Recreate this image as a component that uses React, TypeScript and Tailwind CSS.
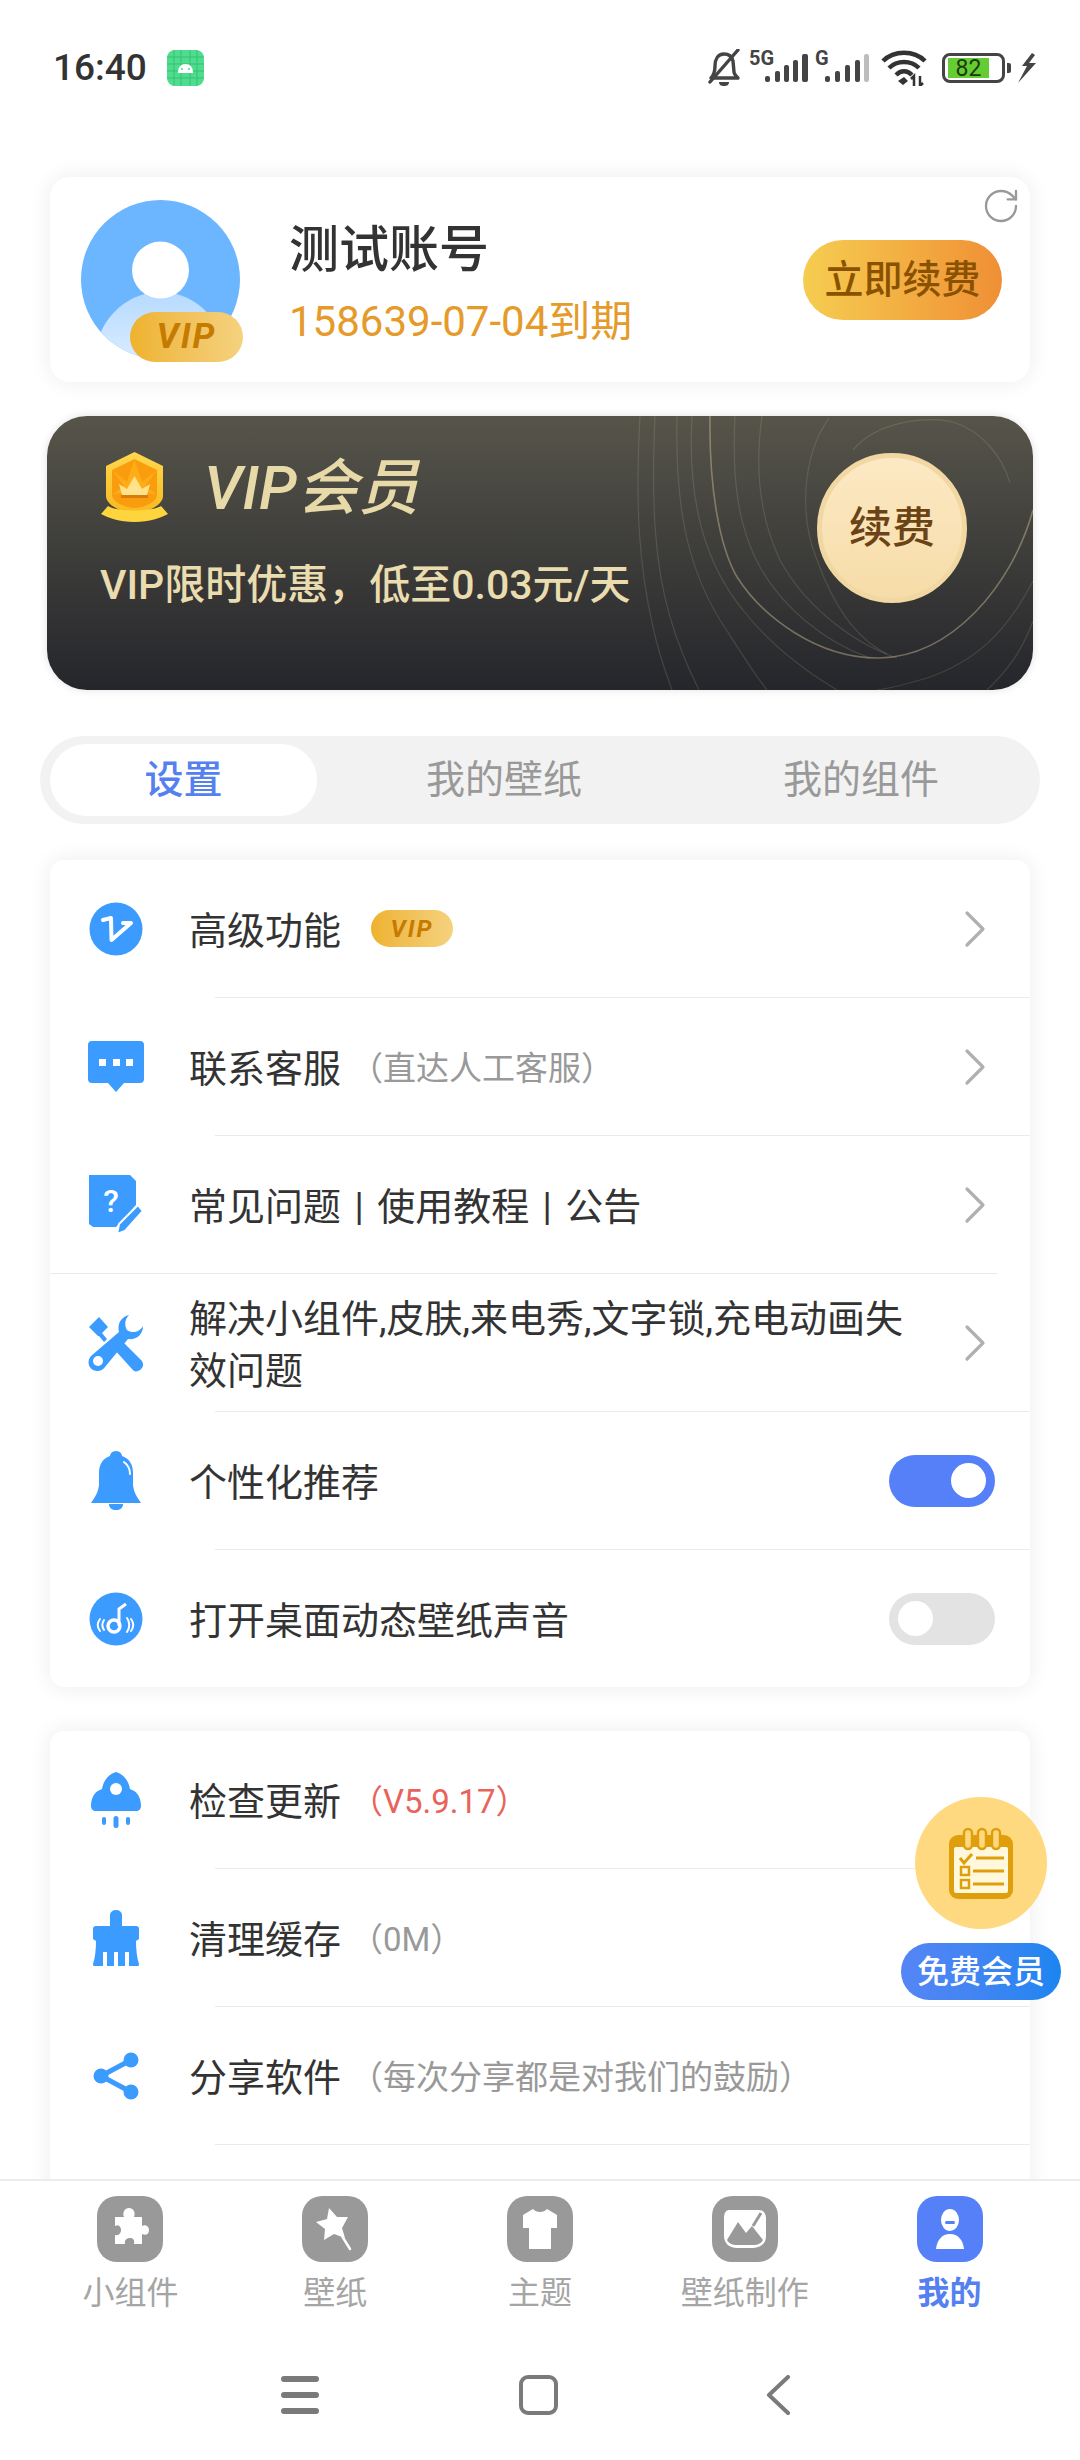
import { RotateCw } from "lucide-react";
import type { ReactNode } from "react";

const BLUE = "#3b9bff";

const VipTag = ({ className }: { className: string }) => (
  <div className={`flex items-center justify-center rounded-full bg-linear-to-r from-[#eeb22c] to-[#f5d27e] italic font-bold text-[#c57a00] ${className}`}>
    VIP
  </div>
);

const Chevron = () => (
  <svg width="22" height="38" viewBox="0 0 22 38" className="mr-[9px] shrink-0">
    <polyline points="3,3 19,19 3,35" fill="none" stroke="#b0b0b0" strokeWidth="3.2" strokeLinecap="round" strokeLinejoin="round" />
  </svg>
);

const Toggle = ({ on }: { on: boolean }) => (
  <div className={`flex h-[52px] w-[106px] shrink-0 items-center rounded-full px-[9px] ${on ? "justify-end bg-[#5580f8]" : "justify-start bg-[#e3e3e3]"}`}>
    <div className="h-[35px] w-[35px] rounded-full bg-white" />
  </div>
);

const VCircle = () => (
  <svg width="54" height="54" viewBox="0 0 54 54">
    <circle cx="27" cy="27" r="26.5" fill={BLUE} />
    <path d="M14 18 L22 16 L22.5 38 L42 21 L34 21" fill="none" stroke="#fff" strokeWidth="4" strokeLinejoin="round" strokeLinecap="round" />
  </svg>
);

const ChatIcon = () => (
  <svg width="56" height="52" viewBox="0 0 56 52">
    <path d="M4 0 H52 a4 4 0 0 1 4 4 V38 a4 4 0 0 1 -4 4 H36 L28 51 L20 42 H4 a4 4 0 0 1 -4 -4 V4 a4 4 0 0 1 4 -4 Z" fill={BLUE} />
    <rect x="11" y="18" width="7" height="7" fill="#fff" />
    <rect x="25" y="18" width="7" height="7" fill="#fff" />
    <rect x="38" y="18" width="7" height="7" fill="#fff" />
  </svg>
);

const HelpIcon = () => (
  <svg width="56" height="60" viewBox="0 0 56 60">
    <path d="M1 0 H42 L48 6 V30 L28 52 H5 L1 49 Z" fill={BLUE} />
    <path d="M29 59 L31 49 L50 30 L55 36 L37 56 Z" fill={BLUE} stroke="#fff" strokeWidth="2" />
    <text x="23" y="37" textAnchor="middle" fontSize="32" fontWeight="500" fill="#fff" fontFamily="Roboto">?</text>
  </svg>
);

const ToolsIcon = () => (
  <svg width="56" height="58" viewBox="0 0 56 58">
    <path d="M1 13 L11 3 L20 13 L14 19 L19 25 L16 28 L11 22 L10 22 Z" fill={BLUE} />
    <path d="M41 1 C33 3 29 10 31 18 L3 42 C-1 47 0 53 5 56 C10 58 14 57 17 53 L40 25 C48 26 55 21 55 12 C52 18 44 20 39 16 C36 11 37 5 41 1 Z" fill={BLUE} />
    <path d="M25 34 L33 26 L54 47 C56 51 55 54 52 56 C49 58 46 58 44 55 Z" fill={BLUE} />
    <circle cx="10" cy="47" r="5" fill="#fff" />
  </svg>
);

const BellIcon = () => (
  <svg width="50" height="60" viewBox="0 0 50 60">
    <path d="M25 0 C29 0 31 3 31 5 C39 8 42 14 42 22 L42 34 C43 42 46 46 50 52 H0 C4 46 7 42 8 34 L8 22 C8 14 11 8 19 5 C19 3 21 0 25 0 Z" fill={BLUE} />
    <path d="M18 53 H32 C32 57 29 59 25 59 C21 59 18 57 18 53 Z" fill={BLUE} />
    <path d="M33 11 C37 14 39 18 39 23" fill="none" stroke="#fff" strokeWidth="2" strokeLinecap="round" />
  </svg>
);

const SoundIcon = () => (
  <svg width="54" height="54" viewBox="0 0 54 54">
    <circle cx="27" cy="27" r="26.5" fill={BLUE} />
    <circle cx="25" cy="34" r="6" fill="none" stroke="#fff" strokeWidth="3.4" />
    <path d="M30 34 L30 17 L37 12" fill="none" stroke="#fff" strokeWidth="3" />
    <path d="M15 28 C13 31 13 35 15 38 M11 27 C8 31 8 35 11 39 M38 26 C41 30 41 36 38 40 M42 27 C45 31 45 35 42 39" fill="none" stroke="#fff" strokeWidth="2" strokeLinecap="round" />
  </svg>
);

const RocketIcon = () => (
  <svg width="50" height="56" viewBox="0 0 50 56">
    <path d="M25 0 C33 2 38 10 39 17 C45 19 50 24 50 34 C50 37 48 39 45 39 H5 C2 39 0 37 0 34 C0 24 5 19 11 17 C12 10 17 2 25 0 Z" fill={BLUE} />
    <circle cx="25" cy="17" r="6" fill="#fff" />
    <rect x="11" y="45" width="4" height="8" rx="2" fill={BLUE} />
    <rect x="22.5" y="44" width="5" height="12" rx="2.5" fill={BLUE} />
    <rect x="35" y="45" width="4" height="8" rx="2" fill={BLUE} />
  </svg>
);

const BrushIcon = () => (
  <svg width="48" height="56" viewBox="0 0 48 56">
    <path d="M18 5 a6 5 0 0 1 12 0 V16 H44 a3 3 0 0 1 3 3 V29 L44 31 C44 40 45 48 47 54 a1.5 1.5 0 0 1 -1 2 H37 V42 H33 V56 H26 V42 H22 V56 H15 V42 H11 V56 H2 a1.5 1.5 0 0 1 -1 -2 C3 48 4 40 4 31 L1 29 V19 a3 3 0 0 1 3 -3 H18 Z" fill={BLUE} />
  </svg>
);

const ShareIcon = () => (
  <svg width="46" height="48" viewBox="0 0 46 48">
    <path d="M38 8 L8 24 L38 40" fill="none" stroke={BLUE} strokeWidth="5" />
    <circle cx="38" cy="8" r="7.5" fill={BLUE} />
    <circle cx="8" cy="24" r="7.5" fill={BLUE} />
    <circle cx="38" cy="40" r="7.5" fill={BLUE} />
  </svg>
);

type Row = {
  icon: ReactNode;
  title: string;
  sub?: string;
  subColor?: string;
  vip?: boolean;
  right?: "chevron" | "on" | "off";
  divider?: "inset" | "wide" | "none";
};

const settingsRows: Row[] = [
  { icon: <VCircle />, title: "高级功能", vip: true, right: "chevron" },
  { icon: <ChatIcon />, title: "联系客服", sub: "（直达人工客服）", right: "chevron" },
  { icon: <HelpIcon />, title: "常见问题 | 使用教程 | 公告", right: "chevron", divider: "wide" },
  { icon: <ToolsIcon />, title: "解决小组件,皮肤,来电秀,文字锁,充电动画失效问题", right: "chevron" },
  { icon: <BellIcon />, title: "个性化推荐", right: "on" },
  { icon: <SoundIcon />, title: "打开桌面动态壁纸声音", right: "off", divider: "none" },
];

const otherRows: Row[] = [
  { icon: <RocketIcon />, title: "检查更新", sub: "（V5.9.17）", subColor: "text-[#e8635a]" },
  { icon: <BrushIcon />, title: "清理缓存", sub: "（0M）" },
  { icon: <ShareIcon />, title: "分享软件", sub: "（每次分享都是对我们的鼓励）" },
  { icon: null, title: "" },
];

const ListCard = ({ rows }: { rows: Row[] }) => (
  <div className="rounded-[14px] bg-white shadow-[0_0_22px_rgba(0,0,0,0.08)]">
    {rows.map((row, i) => (
      <div key={i}>
        <div className="flex h-[137px] items-center pl-[38px] pr-[35px]">
          <div className="flex w-[56px] shrink-0 justify-center">{row.icon}</div>
          <div className="ml-[45px] flex min-w-0 flex-1 items-center pr-[32px] pt-[5px]">
            <span className="text-[38px] leading-[52px] text-[#333] [word-spacing:4px]">{row.title}</span>
            {row.vip && <VipTag className="-mt-[5px] ml-[30px] h-[37px] w-[82px] shrink-0 text-[24px] tracking-[2px]" />}
            {row.sub && <span className={`ml-[9px] whitespace-nowrap text-[33px] ${row.subColor || "text-[#999]"}`}>{row.sub}</span>}
          </div>
          {row.right === "chevron" && <Chevron />}
          {row.right === "on" && <Toggle on />}
          {row.right === "off" && <Toggle on={false} />}
        </div>
        {row.divider !== "none" && (
          <div className={row.divider === "wide" ? "mr-[33px] h-px bg-[#ebebeb]" : "ml-[165px] h-px bg-[#ebebeb]"} />
        )}
      </div>
    ))}
  </div>
);

const PuzzleGlyph = () => (
  <svg width="38" height="42" viewBox="0 0 38 42">
    <path d="M4 9 H13 C11 4 14 0 18 0 C22 0 25 4 23 9 H31 V18 C35 16 38 19 38 22 C38 26 35 28 31 26 V36 H23 C24 32 22 30 19 30 C16 30 13 32 14 36 H4 V27 C8 28 10 25 10 22 C10 19 8 16 4 18 Z" fill="#fff" />
  </svg>
);
const StarGlyph = () => (
  <svg width="40" height="44" viewBox="0 0 40 44">
    <path d="M14 1 L22 10 L33 10 L27 21 L30 31 L19 27 L9 33 L10 22 L1 15 L12 12 Z" fill="#fff" />
    <path d="M27 29 L35 42" stroke="#fff" strokeWidth="2.5" strokeLinecap="round" />
  </svg>
);
const ShirtGlyph = () => (
  <svg width="36" height="42" viewBox="0 0 36 42">
    <path d="M11 1 C14 5 22 5 25 1 L35 7 L35 20 L29 20 L29 41 L7 41 L7 20 L1 20 L1 7 Z" fill="#fff" />
  </svg>
);
const PictureGlyph = () => (
  <svg width="44" height="42" viewBox="0 0 44 42">
    <path d="M6 2 H36 C40 2 43 5 43 10 V28 C43 35 38 40 30 40 H14 C6 40 1 35 1 28 V10 C1 5 3 2 6 2 Z" fill="#fff" />
    <path d="M4 32 L15 14 L23 25 L29 18 L40 32 C38 36 34 37 30 37 H14 C10 37 6 36 4 32 Z" fill="#999" />
    <path d="M30 18 L38 5" stroke="#999" strokeWidth="3" />
  </svg>
);
const PersonGlyph = () => (
  <svg width="30" height="42" viewBox="0 0 30 42">
    <ellipse cx="15" cy="12" rx="9" ry="11" fill="#fff" />
    <rect x="10" y="13" width="10" height="3" rx="1.5" fill="#5580f8" />
    <path d="M1 41 C2 32 7 26 15 26 C23 26 28 32 29 41 Z" fill="#fff" />
  </svg>
);

const tabs = [
  { label: "小组件", glyph: <PuzzleGlyph /> },
  { label: "壁纸", glyph: <StarGlyph /> },
  { label: "主题", glyph: <ShirtGlyph /> },
  { label: "壁纸制作", glyph: <PictureGlyph /> },
  { label: "我的", glyph: <PersonGlyph />, active: true },
];

const StatusIcons = () => (
  <div className="flex items-center">
    <svg width="34" height="38" viewBox="0 0 34 38">
      <path d="M4 29 C7 26 8 23 8 17 C8 10 11 5 17 5 C22 5 25 8 26 12 L27 23 C27 25 29 27 31 29 Z" fill="none" stroke="#444" strokeWidth="3.4" strokeLinejoin="round" />
      <path d="M31 1 L3 33" stroke="#444" strokeWidth="3.4" strokeLinecap="round" />
      <path d="M12 33 H22 C22 36 20 37 17 37 C14 37 12 36 12 33 Z" fill="#444" />
    </svg>
    <svg width="120" height="46" viewBox="0 -4 120 46" className="-my-[4px] ml-[8px]">
      <text x="0" y="16" fontSize="20" fontWeight="700" fill="#444" fontFamily="Roboto">5G</text>
      <rect x="16" y="27" width="5" height="6" rx="2" fill="#444" />
      <rect x="26" y="22" width="5" height="11" rx="2" fill="#444" />
      <rect x="35" y="16" width="5" height="17" rx="2" fill="#444" />
      <rect x="44" y="11" width="5" height="22" rx="2" fill="#444" />
      <rect x="53" y="5" width="6" height="28" rx="2" fill="#444" />
      <text x="66" y="16" fontSize="20" fontWeight="700" fill="#444" fontFamily="Roboto">G</text>
      <rect x="76" y="27" width="5" height="6" rx="2" fill="#444" />
      <rect x="86" y="22" width="5" height="11" rx="2" fill="#444" />
      <rect x="96" y="16" width="5" height="17" rx="2" fill="#444" />
      <rect x="106" y="11" width="5" height="22" rx="2" fill="#444" />
      <rect x="115" y="5" width="5" height="28" rx="2" fill="#bdbdbd" />
    </svg>
    <svg width="46" height="36" viewBox="0 0 46 36" className="ml-[12px]">
      <path d="M2 11 C13 0 33 0 44 11" fill="none" stroke="#333" strokeWidth="4.5" />
      <path d="M8 18 C16 10 30 10 38 18" fill="none" stroke="#333" strokeWidth="4.5" />
      <path d="M15 25 C20 20 26 20 31 25" fill="none" stroke="#333" strokeWidth="4.5" />
      <path d="M17 31 L23 27 L27 31 L22 35 Z" fill="#333" />
      <path d="M33 36 V26 L30 29 M39 26 V36 L42 33" fill="none" stroke="#333" strokeWidth="2.5" />
    </svg>
    <div className="ml-[15px] flex h-[30px] w-[63px] items-center rounded-[8px] border-[3px] border-[#444] pl-[3px]">
      <div className="flex h-[20px] w-[41px] items-center justify-center bg-[#66cc33] font-['Roboto'] text-[23px] leading-none text-[#1c3a0c]">82</div>
    </div>
    <div className="ml-[2px] h-[10px] w-[4px] rounded-r-[2px] bg-[#444]" />
    <svg width="18" height="30" viewBox="0 0 18 30" className="ml-[7px]">
      <path d="M14 0 L4 13 L9 13 L0 30 L18 10 L11 10 L17 2 Z" fill="#444" />
    </svg>
  </div>
);

const AndroidBadge = () => (
  <svg width="37" height="36" viewBox="0 0 37 36" className="ml-[20px]">
    <rect width="37" height="36" rx="8" fill="#4fdc8e" />
    <path d="M0 7 H37 M0 14 H37 M0 21 H37 M0 28 H37 M7 0 V36 M14 0 V36 M23 0 V36 M30 0 V36" stroke="#2bb76a" strokeWidth="1" opacity="0.7" />
    <path d="M11 23 C11 17 14 14 18.5 14 C23 14 26 17 26 23 Z" fill="#fff" />
    <circle cx="15" cy="19" r="1" fill="#3ddc84" />
    <circle cx="22" cy="19" r="1" fill="#3ddc84" />
  </svg>
);

const Avatar = () => (
  <svg width="159" height="159" viewBox="0 0 159 159" className="shrink-0">
    <defs>
      <linearGradient id="avatarBody" x1="0" y1="0" x2="0" y2="1">
        <stop offset="0" stopColor="#b6daff" />
        <stop offset="1" stopColor="#ffffff" />
      </linearGradient>
      <clipPath id="avatarClip">
        <circle cx="79.5" cy="79.5" r="79.5" />
      </clipPath>
    </defs>
    <circle cx="79.5" cy="79.5" r="79.5" fill="#6bb6ff" />
    <g clipPath="url(#avatarClip)">
      <ellipse cx="79.5" cy="162" rx="66" ry="70" fill="url(#avatarBody)" />
    </g>
    <circle cx="79.5" cy="70" r="28.5" fill="#fff" />
  </svg>
);

const Medal = () => (
  <svg width="69" height="70" viewBox="0 0 69 70">
    <defs>
      <linearGradient id="medalRim" x1="0" y1="0" x2="0" y2="1">
        <stop offset="0" stopColor="#ffd84d" />
        <stop offset="1" stopColor="#f8b91e" />
      </linearGradient>
    </defs>
    <path d="M34.5 0 L63 14 V44 C63 52 50 60 34.5 62 C19 60 6 52 6 44 V14 Z" fill="url(#medalRim)" />
    <path d="M34.5 7 L57 18 V43 C57 49 47 55 34.5 56 C22 55 12 49 12 43 V18 Z" fill="#f99d0e" />
    <path d="M34.5 7 L42 30 L57 18 L45 34 L57 43 L34.5 38 L12 43 L24 34 L12 18 L27 30 Z" fill="#ffb11b" opacity="0.8" />
    <path d="M19 32 L27 37 L34.5 24 L42 37 L50 32 L47 43 H22 Z" fill="#ffe28a" />
    <rect x="21" y="43" width="27" height="3" fill="#d97c08" />
    <path d="M1 62 L8 54 C16 60 52 60 61 54 L68 62 C60 66 50 70 34.5 70 C19 70 9 66 1 62 Z" fill="#ffd53d" />
  </svg>
);

// concentric gold arcs behind the renew button, banner coordinates
const goldLines = [
  "M663 0 C662 70 672 130 690 161 C715 200 770 243 833 242 C905 240 965 170 986 94",
  "M645 0 C640 90 660 150 696 194 C720 225 750 250 790 274",
  "M630 0 C628 90 640 150 673 204 C690 230 705 255 720 274",
  "M608 0 C604 90 608 150 623 201 C630 225 640 250 652 274",
  "M593 0 C588 90 592 150 606 211 C610 230 618 255 625 274",
  "M688 0 C685 60 690 110 713 151 C735 190 775 225 823 242",
  "M715 0 C708 50 712 100 733 144 C755 185 800 225 850 242",
  "M782 2 C755 40 752 100 770 144 C785 185 805 220 840 238",
  "M806 34 C830 5 880 0 906 6 C935 15 955 40 963 67",
  "M986 165 C960 215 930 245 880 262 C860 268 845 272 830 274",
  "M986 205 C975 235 960 255 940 274",
];

function App() {
  return (
    <div className="relative flex h-[2460px] w-[1080px] flex-col overflow-hidden bg-white font-['Roboto','Noto_Sans_CJK_SC',sans-serif]">
      <div className="flex h-[137px] shrink-0 items-start justify-between pl-[53px] pr-[44px] pt-[49px]">
        <div className="flex items-center">
          <span className="w-[94px] font-['Roboto'] text-[37px] font-medium leading-[38px] text-[#333]">16:40</span>
          <AndroidBadge />
        </div>
        <StatusIcons />
      </div>

      <div className="min-h-0 flex-1 overflow-hidden px-[50px] pt-[40px]">
        <div className="relative flex h-[205px] rounded-[20px] bg-white pl-[31px] shadow-[0_0_22px_rgba(0,0,0,0.08)]">
          <div className="relative mt-[23px] h-[159px] w-[159px] shrink-0">
            <Avatar />
            <VipTag className="absolute left-[49px] top-[112px] h-[50px] w-[113px] text-[35px] tracking-[2px]" />
          </div>
          <div className="ml-[49px] mt-[43px] flex-1">
            <div className="text-[50px] font-medium leading-[60px] text-[#333]">测试账号</div>
            <div className="mt-[17px] text-[42px] leading-[50px] text-[#e59a2a]">158639-07-04到期</div>
          </div>
          <div className="mr-[28px] mt-[63px] flex h-[80px] w-[199px] items-center justify-center rounded-full bg-linear-to-r from-[#f5cd50] to-[#ef8f35] text-[39px] font-medium text-[#8a5200]">
            立即续费
          </div>
          <RotateCw className="absolute right-[9px] top-[9px] h-[40px] w-[40px] text-[#999]" strokeWidth={1.4} />
        </div>

        <div className="relative -mx-[3px] mt-[34px] flex h-[274px] justify-between overflow-hidden rounded-[40px] bg-linear-to-b from-[#57554a] to-[#25262b] shadow-[0_0_8px_rgba(0,0,0,0.12)]">
          <svg width="986" height="274" viewBox="0 0 986 274" className="absolute inset-0">
            {goldLines.map((d, i) => (
              <path key={i} d={d} fill="none" stroke="#d9c9a0" strokeWidth={i === 0 ? 1.6 : 1.2} opacity={i === 0 ? 0.42 : 0.16} />
            ))}
          </svg>
          <div className="relative pl-[53px] pt-[36px]">
            <div className="flex h-[70px] items-center">
              <Medal />
              <span className="ml-[35px] mt-[3px] text-[61px] font-medium italic leading-none text-[#e8d9a8]">VIP会员</span>
            </div>
            <div className="mt-[38px] text-[41px] font-medium leading-[50px] text-[#eadcae]">VIP限时优惠，低至0.03元/天</div>
          </div>
          <div className="relative mr-[66px] mt-[37px] flex h-[150px] w-[150px] items-center justify-center rounded-full border-[5px] border-[#f1d7a2] bg-linear-to-b from-[#fce9c4] to-[#f6dca8] text-[43px] font-medium text-[#6b4315]">
            续费
          </div>
        </div>

        <div className="-mx-[10px] mt-[46px] flex h-[88px] items-center rounded-full bg-[#f2f2f2] pl-[10px] text-[39px] text-[#999]">
          <div className="flex h-[72px] w-[267px] items-center justify-center rounded-full bg-white font-medium text-[#5580f0]">设置</div>
          <div className="flex w-[374px] justify-center">我的壁纸</div>
          <div className="flex w-[340px] justify-center">我的组件</div>
        </div>

        <div className="mt-[36px]">
          <ListCard rows={settingsRows} />
        </div>
        <div className="mt-[44px]">
          <ListCard rows={otherRows} />
        </div>
      </div>

      <div className="h-[281px] shrink-0 border-t-2 border-[#ececec] bg-white">
        <div className="grid grid-cols-5 px-[28px] pt-[15px]">
          {tabs.map((tab) => (
            <div key={tab.label} className="flex flex-col items-center">
              <div className={`flex h-[66px] w-[66px] items-center justify-center rounded-[20px] ${tab.active ? "bg-[#5580f8]" : "bg-[#999]"}`}>
                {tab.glyph}
              </div>
              <div className={`mt-[11px] text-[32px] leading-[40px] ${tab.active ? "font-bold text-[#5580f0]" : "text-[#a5a5a5]"}`}>{tab.label}</div>
            </div>
          ))}
        </div>
        <div className="ml-[281px] mt-[62px] flex items-center">
          <div className="flex w-[38px] flex-col gap-[10px]">
            <div className="h-[6px] rounded-full bg-[#7a7a7a]" />
            <div className="h-[6px] rounded-full bg-[#7a7a7a]" />
            <div className="h-[6px] rounded-full bg-[#7a7a7a]" />
          </div>
          <div className="ml-[200px] h-[40px] w-[39px] rounded-[9px] border-[4px] border-[#7a7a7a]" />
          <svg width="24" height="40" viewBox="0 0 24 40" className="ml-[208px]">
            <polyline points="22,2 3,20 22,38" fill="none" stroke="#7a7a7a" strokeWidth="4" strokeLinecap="round" strokeLinejoin="round" />
          </svg>
        </div>
      </div>

      <div className="absolute left-[901px] top-[1797px] flex w-[160px] flex-col items-center">
        <div className="flex h-[132px] w-[132px] items-center justify-center rounded-full bg-[#ffd980]">
          <svg width="64" height="72" viewBox="0 0 64 72">
            <rect x="0" y="8" width="64" height="64" rx="9" fill="#df9f0c" />
            <rect x="5" y="20" width="54" height="46" rx="2" fill="#fff8dc" />
            {[12, 26, 40].map((x) => (
              <rect key={x} x={x + 3} y="2" width="8" height="20" rx="4" fill="#ffd980" stroke="#df9f0c" strokeWidth="2.5" />
            ))}
            <path d="M11 31 L15 36 L23 27" fill="none" stroke="#df9f0c" strokeWidth="3" />
            <path d="M27 31 H55 M24 44 H55 M24 57 H55" stroke="#df9f0c" strokeWidth="3" />
            <rect x="12" y="40" width="8" height="8" fill="none" stroke="#df9f0c" strokeWidth="2.5" />
            <rect x="12" y="53" width="8" height="8" fill="none" stroke="#df9f0c" strokeWidth="2.5" />
          </svg>
        </div>
        <div className="mt-[14px] flex h-[57px] w-[160px] items-center justify-center rounded-full bg-linear-to-r from-[#5585f5] to-[#1a85f0] text-[32px] font-medium text-white">
          免费会员
        </div>
      </div>
    </div>
  );
}

export default App;
